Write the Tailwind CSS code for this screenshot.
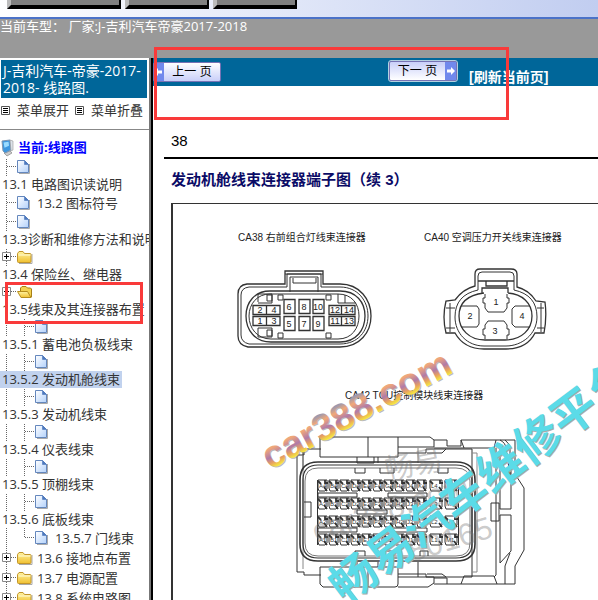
<!DOCTYPE html>
<html lang="zh-CN">
<head>
    <meta charset="UTF-8">
    <meta name="viewport" content="width=device-width, initial-scale=1.0">
    <title>J-吉利汽车-帝豪-2017-2018- 线路图</title>
    <script src="https://cdn.jsdelivr.net/npm/@tailwindcss/browser@4"></script>
</head>
<body class="relative flex flex-col h-screen overflow-hidden bg-white text-[#333] text-[13px] font-['Open_Sans','Noto_Sans_CJK_SC',sans-serif]">
    <svg class="absolute size-0">
        <defs>
            <linearGradient id="paper" x1="0" y1="0" x2="1" y2="1"><stop offset="0" stop-color="#fff"/><stop offset="1" stop-color="#b4d2fb"/></linearGradient>
            <linearGradient id="gold" x1="0" y1="0" x2="0" y2="1"><stop offset="0" stop-color="#fff3a0"/><stop offset="1" stop-color="#f0c030"/></linearGradient>
        </defs>
        <symbol id="doc" viewBox="0 0 18 18">
            <path d="M12.500 6v9.500H2" fill="none" stroke="#aaa"/>
            <path d="M.5 2.500h7l4 4v8H.5z" fill="url(#paper)" stroke="#6487bd"/>
            <path d="M7.500 2.500v4h4z" fill="#4d79bd" stroke="#4d79bd" stroke-width=".6"/>
        </symbol>
        <symbol id="folder" viewBox="0 0 18 18">
            <path d="M2 15.500h13V6" fill="none" stroke="#aaa"/>
            <path d="M.5 5.500l1.500-2h4l1.500 2h5.500q1 0 1 1v7q0 1-1 1h-11.500q-1 0-1-1z" fill="url(#gold)" stroke="#c2962b"/>
            <path d="M1.500 7h12" stroke="#fffbd6"/>
        </symbol>
        <symbol id="open" viewBox="0 0 18 18">
            <path d="M3.500 12V5l1.500-1.500h4l1.500 1.500h3l1 1v8h-8z" fill="#f3d250" stroke="#a88118"/>
            <path d="M.5 8.500h10l3.500 6H4z" fill="url(#gold)" stroke="#b58c1c"/>
        </symbol>
        <symbol id="plus" viewBox="0 0 10 10">
            <path d="M.5.5h8v8h-8z" fill="#fff" stroke="#888"/><path d="M2 4.500h5M4.500 2v5" stroke="#000"/>
        </symbol>
        <symbol id="minus" viewBox="0 0 10 10">
            <path d="M.5.5h8v8h-8z" fill="#fff" stroke="#888"/><path d="M2 4.500h5" stroke="#000"/>
        </symbol>
    </svg>

    <!-- toolbar -->
    <div class="h-[19px] shrink-0 flex gap-1 items-start pl-[7px] bg-linear-to-r from-white to-[#c1cdf0] border-b-2 border-[#4b72c8]">
        <button aria-label="工具一" class="w-[114px] h-[9px] bg-[#808080] border-b-4 border-b-black border-r-2 border-r-black border-l-4 border-l-[#bbb]"></button>
        <button aria-label="工具二" class="w-[84px] h-[9px] bg-[#808080] border-b-4 border-b-black border-r-2 border-r-black border-l-4 border-l-[#bbb]"></button>
        <button aria-label="工具三" class="w-[84px] h-[9px] bg-[#808080] border-b-4 border-b-black border-r-2 border-r-black border-l-4 border-l-[#bbb]"></button>
    </div>
    <div class="h-[39px] shrink-0 bg-[#999] text-white leading-[14px] whitespace-pre">当前车型： 厂家:J-吉利汽车帝豪2017-2018</div>

    <div class="flex flex-1 min-h-0">
        <!-- menu -->
        <nav class="w-[149px] shrink-0 overflow-hidden">
            <h1 class="mt-[2px] ml-px mr-[2px] h-[38px] px-[2px] pt-[2px] bg-[#069] text-white text-[14px] leading-[17px] whitespace-nowrap">J-吉利汽车-帝豪-2017-<br>2018- 线路图.</h1>
            <div class="flex items-center h-[32px] pb-1.5 border-b border-[#888]">
                <button class="flex items-center gap-1.5 w-[74px] pl-px whitespace-nowrap"><svg class="size-[10px] shrink-0" viewBox="0 0 10 10"><path d="M.5.5h8v8h-8z" fill="#fff" stroke="#555"/><path d="M2 2.500h5M2 4.500h5M2 6.500h5" stroke="#000"/></svg>菜单展开</button>
                <button class="flex items-center gap-1.5 pl-px whitespace-nowrap"><svg class="size-[10px] shrink-0" viewBox="0 0 10 10"><path d="M.5.5h8v8h-8z" fill="#fff" stroke="#555"/><path d="M2 2.500h5M2 4.500h5M2 6.500h5" stroke="#000"/></svg>菜单折叠</button>
            </div>
            <div class="flex items-center h-5 mt-2 gap-0.5">
                <svg class="w-4 h-[18px]" viewBox="0 0 16 18">
                    <path d="M4 14l6-2 2 2-5 3z" fill="#ccc" stroke="#888" stroke-width=".7"/>
                    <path d="M2 2l8-1 1 10-6 3-2-2z" fill="#3c97e0" stroke="#8097b0"/>
                    <path d="M3.500 3.500l5-.7.5 4-4.500 2z" fill="#9adcff"/>
                    <path d="M10 1l3 1v9l-2 1z" fill="#dde3ea" stroke="#999" stroke-width=".6"/>
                </svg>
                <a href="#" class="font-bold text-[#00f]">当前:线路图</a>
            </div>
            <div id="tree"></div>
        </nav>
        <div class="w-1 shrink-0 bg-black border-l-2 border-[#777]"></div>

        <!-- page -->
        <main class="flex-1 min-w-0 overflow-hidden">
            <div class="flex items-start h-7 bg-[#069] pt-[3px] whitespace-nowrap font-['Liberation_Sans','Noto_Sans_CJK_SC',sans-serif]">
                <button class="flex items-center w-[68px] h-5 mt-px bg-linear-to-b from-white to-[#c9cff8] border border-[#7773b5] rounded-xs text-black text-[12px]">
                    <span class="flex items-center w-2.5 h-full bg-[#7189ec]"><svg class="size-2" viewBox="0 0 8 8"><path d="M0 4l4-4v2.500h4v3H4V8z" fill="#fff"/></svg></span>
                    <span class="flex-1 text-center">上一 页</span>
                </button>
                <button class="flex items-center w-[68px] h-5 ml-[168px] bg-linear-to-b from-[#c9cff8] to-white border border-[#7773b5] rounded-xs text-black text-[12px] outline outline-white/70">
                    <span class="flex-1 text-center">下一 页</span>
                    <span class="flex items-center justify-center w-[11px] h-full bg-[#7189ec]"><svg class="size-2" viewBox="0 0 8 8"><path d="M8 4L4 0v2.500H0v3h4V8z" fill="#fff"/></svg></span>
                </button>
                <a href="#" class="ml-3 mt-[7px] text-white font-bold text-[14px] leading-[18px]">[刷新当前页]</a>
            </div>
            <div class="pl-[11px] font-['Liberation_Sans','Noto_Sans_CJK_SC',sans-serif]">
                <div class="pt-[45px] pl-[7px] h-[73px] border-b-2 border-black text-[15px] leading-5 text-black">38</div>
                <h2 class="pl-[7px] pt-[10px] h-[44px] text-[15px] leading-[22px] font-bold text-[#0b0b66] whitespace-nowrap">发动机舱线束连接器端子图（续 3）</h2>
                <div class="ml-[7px] border-l-2 border-t border-[#333] overflow-hidden">
                    <svg class="block w-[426px] h-[396px] max-w-none font-['Liberation_Sans','Noto_Sans_CJK_SC',sans-serif]" viewBox="173 204 426 396" fill="none" stroke="#333">
                        <defs>
                            <linearGradient id="rainbow" x1="0" y1="0" x2="0" y2="1">
                                <stop offset=".15" stop-color="#7e93c0"/><stop offset=".35" stop-color="#f2a878"/><stop offset=".55" stop-color="#b07aa8"/><stop offset=".68" stop-color="#e8a060"/><stop offset=".8" stop-color="#f4e640"/>
                            </linearGradient>
                        </defs>
                        <g fill="#222" stroke="none" font-size="10">
                            <text x="238" y="241">CA38 右前组合灯线束连接器</text>
                            <text x="424" y="241">CA40 空调压力开关线束连接器</text>
                            <text x="345" y="399">CA42 TCU控制模块线束连接器</text>
                        </g>

                        <!-- CA38 -->
                        <path d="M247 284h38v-13h38v13h17c20 0 31 16 31 32s-11 31-31 31h-92q-10-2-10-11v-42q0-9 9-10z" stroke-width="1.300"/>
                        <path d="M249 287h38v-13h34v13h19c18 0 28 14 28 29s-10 28-28 28h-91q-8-2-8-9v-40q0-7 8-8z"/>
                        <path d="M270 291h70c16 0 25 11 25 25s-9 26-25 26h-69c-16 0-25-12-25-26s9-25 24-25z" stroke-width="1.300"/>
                        <path d="M270 294h68c14 0 21 10 21 22s-7 23-21 23h-67c-14 0-22-11-22-23s8-22 21-22z"/>
                        <path d="M290 292v-15h28v15M293 278v5h23v-5M285 274h38"/>
                        <path d="M253 305.500h27v9h-27zM266.500 305v10M253 316.500h27v9h-27zM266.500 316v10M284 299.500h11v14h-11zM299 299.500h11v14h-11zM313 299.500h11v14h-11zM284 316.500h11v14h-11zM299 316.500h11v14h-11zM313 316.500h11v14h-11zM329 305.500h26v9h-26zM341.500 305v10M329 316.500h26v9h-26zM341.500 316v10" stroke-width="1.300"/>
                        <path d="M258 302v-8h14v9h-14M267 295h5v6h-5zM278 295h5v5h-5zM326 295h5v5h-5zM258 328h14v9h-14zM267 330h5v6h-5zM278 333h5v5h-5zM326 333h5v5h-5zM338 303v-9M345 303v-8M338 303h18"/>
                        <g fill="#222" stroke="none" font-size="9" text-anchor="middle">
                            <text x="260" y="313">2</text><text x="274" y="313">4</text><text x="260" y="324">1</text><text x="274" y="324">3</text>
                            <text x="289" y="310">6</text><text x="304" y="310">8</text><text x="318" y="310">10</text>
                            <text x="289" y="327">5</text><text x="304" y="327">7</text><text x="318" y="327">9</text>
                            <text x="335" y="313">12</text><text x="349" y="313">14</text><text x="335" y="324">11</text><text x="349" y="324">13</text>
                        </g>

                        <!-- CA40 -->
                        <path d="M475 286v-12q0-5 5-5h31q6 0 6 5v13q12 3 19 14l9 1q2 15-1 31h-9q-8 16-29 16h-22q-20 0-29-16h-9q-4-16 0-32l9-1q8-11 20-14z" stroke-width="1.300"/>
                        <path d="M478 290v-14q0-4 4-4h28q4 0 4 4v14q23 5 23 27c0 17-15 29-31 29h-22c-17 0-29-13-29-29q0-22 23-27z"/>
                        <path d="M484 293c-16 2-25 10-25 23s10 24 26 24h20c17 0 27-11 27-24s-10-22-24-23M482 293v-5h26v5M478 281h36M486 281v5h21v-5" stroke-width="1.300"/>
                        <path d="M485 294v4h-2v5h2v5l3 4h16l3-4v-5h2v-5h-2v-4M485 339v-4h-2v-6h2v-4l3-4h16l3 4v4h2v6h-2v4M461 306h16l2 3v15l-2 3h-16M530 306h-15l-3 3v15l3 3h15M446 308h9M446 328h9M537 308h7M537 328h7M450 303v29M541 303v29"/>
                        <g fill="#222" stroke="none" font-size="9" text-anchor="middle">
                            <text x="496" y="305">1</text><text x="470" y="319">2</text><text x="495" y="334">3</text><text x="522" y="319">4</text>
                        </g>

                        <!-- CA42 -->
                        <path d="M320 437h78v20h-78zM368 437v20M398 437h32l4 3v7h-36M434 440h13v6h14v-6h54M434 448h60l2-8M461 440l3 8M505 440q5 4 5 8v27M515 440v34l9 14v62l-9 16v18M500 440q6 3 6 9l4 26M510 553l-5 13v18M434 584h81"/>
                        <path d="M321 449h-17v6h-7v117h7v3h17M303 450v20M398 453h28v-4h46v128h-46v-3h-28M427 453h15l4-4M427 574h15l4 3M357 457v6h17v-6M378 457v6"/>
                        <path d="M472 453h5v119h-5M418 448v15M303 455v114" stroke="#888"/>
                        <path d="M320 567h78v17q0 3-3 3h-72l-3-3zM368 567v20M398 587h30l6-4v-6h-36M434 578h13v6M461 584l3-8h30l3 8M357 567v-5M378 567v-5M418 577v-15"/>
                        <path d="M318 462h138q19 0 19 18v64q0 17-19 17H318q-18 0-18-17v-64q0-18 18-18z" stroke-width="1.600"/>
                        <path d="M318 465h138q16 0 16 15v64q0 14-16 14H318q-15 0-15-14v-64q0-15 15-15z" stroke-width="1.200"/>
                        <path d="M318 468h138q14 0 14 13v62q0 13-14 13H318q-13 0-13-13v-62q0-13 13-13z" stroke="#777"/>
                        <path d="M496 448v127l-2 2M491 503h8v18h-8zM500 448v61h11v-50M500 515h11v36l-11 12zM304 502h7v15h-7M355 468v5h10v-5M380 468v5h14v-5M438 468v5h10v-5M355 556v-5h10v5M380 556v-5h14v5M420 556v-5h8v5"/>
                        <path d="M318 493h39v4h-39zM388 493h39v4h-39zM357 510h30v4h-30zM318 528h39v4h-39zM388 528h39v4h-39z" stroke-linejoin="round"/>
                        <g id="pins"></g>

                        <!-- watermarks -->
                        <g fill="#777" fill-opacity=".4" stroke="none">
                            <text font-size="29" transform="translate(387 480) rotate(-11)">畅易</text>
                            <text font-size="31" transform="translate(316 542) rotate(-17)">car388.com</text>
                            <text font-size="31" transform="translate(412 562) rotate(-17)">80165</text>
                        </g>
                        <g stroke="none" font-size="38" font-weight="bold">
                            <text fill="#777" fill-opacity=".5" transform="translate(271 471) rotate(-28)">car388.com</text>
                            <text fill="url(#rainbow)" transform="translate(270 470) rotate(-28)">car388.com</text>
                        </g>
                        <g stroke="none" font-size="46" font-weight="bold">
                            <text fill="#aaa" transform="translate(346 606) rotate(-37)">畅易汽车维修平台</text>
                            <text fill="#5bdbe8" transform="translate(345 605) rotate(-37)">畅易汽车维修平台</text>
                        </g>
                    </svg>
                </div>
            </div>
        </main>
    </div>

    <!-- highlight frames -->
    <div class="absolute left-[154px] top-[47px] w-[355px] h-[73px] border-3 border-[#f93a3a] pointer-events-none"></div>
    <div class="absolute left-[5px] top-[282px] w-[138px] h-[42px] border-3 border-[#f93a3a] pointer-events-none"></div>

    <script>
        // wrap: the label falls below its icon
        const items = [
            { text: '13.1 电路图识读说明', icon: 'doc', level: 1, wrap: true },
            { text: '13.2 图标符号', icon: 'doc', level: 1 },
            { text: '13.3诊断和维修方法和说明', icon: 'doc', level: 1, wrap: true },
            { text: '13.4 保险丝、继电器', icon: 'folder', box: 'plus', level: 1, wrap: true },
            { text: '13.5线束及其连接器布置', icon: 'open', box: 'minus', level: 1, wrap: true },
            { text: '13.5.1 蓄电池负极线束', icon: 'doc', level: 2, wrap: true },
            { text: '13.5.2 发动机舱线束', icon: 'doc', level: 2, wrap: true, selected: true },
            { text: '13.5.3 发动机线束', icon: 'doc', level: 2, wrap: true },
            { text: '13.5.4 仪表线束', icon: 'doc', level: 2, wrap: true },
            { text: '13.5.5 顶棚线束', icon: 'doc', level: 2, wrap: true },
            { text: '13.5.6 底板线束', icon: 'doc', level: 2, wrap: true },
            { text: '13.5.7 门线束', icon: 'doc', level: 2, last: true },
            { text: '13.6 接地点布置', icon: 'folder', box: 'plus', level: 1 },
            { text: '13.7 电源配置', icon: 'folder', box: 'plus', level: 1 },
            { text: '13.8 系统电路图', icon: 'folder', box: 'plus', level: 1 }
        ];

        function branch(item) {
            const box = item.box ? `<use href="#${item.box}" x="2" y="5" width="10" height="10"/>` : '';
            return `<svg class="w-[17px] h-full shrink-0" viewBox="0 0 17 20" preserveAspectRatio="xMinYMid slice">
                <path d="M6.500 ${item.last ? '0v10' : '0v20'}M7 9.500h10" stroke="#666" stroke-dasharray="1 1"/>${box}</svg>`;
        }

        const line = `<svg class="w-[18px] h-full shrink-0" viewBox="0 0 18 20" preserveAspectRatio="xMinYMid slice"><path d="M6.500 0v20" stroke="#666" stroke-dasharray="1 1"/></svg>`;

        document.getElementById('tree').innerHTML = items.map(item => {
            const icons = `${item.level === 2 ? line : ''}${branch(item)}<svg class="size-[18px] shrink-0"><use href="#${item.icon}"/></svg>`;
            const link = `<a href="#" class="${item.selected ? 'bg-[#c1d2ee] pr-0.5 ' : ''}block w-fit pl-0.5 leading-[17px] whitespace-nowrap">${item.text}</a>`;
            if (item.wrap) {
                return `<div class="h-[35px]"><div class="flex items-center h-[18px]">${icons}</div>${link}</div>`;
            }
            return `<div class="flex items-center h-5">${icons}${link}</div>`;
        }).join('');

        // connector pins, four rows of twelve
        let pins = '';
        [480, 498, 516, 534].forEach((y, row) => {
            for (let i = 0; i < 12; i++) {
                const x = i < 10 ? 318 + i * 11 : 430 + (i - 10) * 15;
                const w = i < 10 ? 9 : 12;
                pins += `<path d="M${x} ${y}h${w}v9l-2 2h-${w - 3}l-1-3z"/><path d="M${x} ${y + 1}l3 3M${x + w - 3} ${y + 7}l3 4M${x + w - 2} ${y}v3h3" stroke-width="1.800"/>
                    <text x="${x + 1}" y="${y + 8}" font-size="6" fill="#333" stroke="none">${'ABCDEFGHJKLM'[i]}${4 - row}</text>`;
            }
        });
        document.getElementById('pins').innerHTML = pins + '<path d="M317.500 480v65M458.500 480v65"/>';
    </script>
</body>
</html>
